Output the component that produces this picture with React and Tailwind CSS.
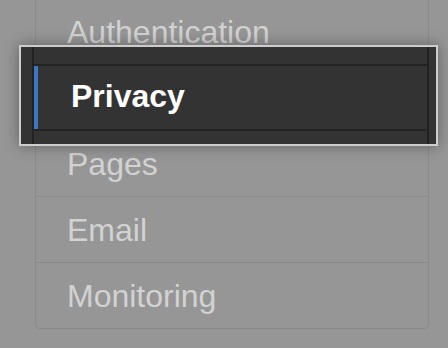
import React from 'react';

const items = ['Authentication', 'Privacy', 'Pages', 'Email', 'Monitoring'];

export default function App() {
  return (
    <div
      className="relative w-[448px] h-[348px] overflow-hidden bg-[#969696]"
      style={{ fontFamily: '"Liberation Sans", Arial, sans-serif' }}
    >
      {/* Menu (dimmed) */}
      <div className="ml-[35px] mt-[-2px] w-[394px] border border-[#8a8a8a] rounded-b-[5px]">
        {items.map((item, i) => (
          <div
            key={item}
            className={`flex items-center pl-[31px] text-[32px] text-[#d2d2d2] ${
              i < items.length - 1 ? 'h-[66px] border-b border-[#8a8a8a]' : 'h-[65px]'
            }`}
          >
            {item}
          </div>
        ))}
      </div>

      {/* Highlighted item */}
      <div className="absolute left-[19px] top-[45px] w-[419px] h-[101px] border-2 border-[#cdcdcd] bg-[#333333] shadow-[0_0_14px_rgba(0,0,0,0.35)]">
        <div className="ml-[11px] w-[397px] h-full border-x-2 border-[#222222] flex flex-col">
          <div className="h-[17px]" />
          <div className="h-[2px] bg-[#222222]" />
          <div className="h-[63px] flex items-center">
            <div className="w-[4px] h-full bg-[#3d77c4]" />
            <span className="pl-[33px] pb-[4px] text-[32px] font-bold text-white">Privacy</span>
          </div>
          <div className="h-[2px] bg-[#222222]" />
        </div>
      </div>
    </div>
  );
}
